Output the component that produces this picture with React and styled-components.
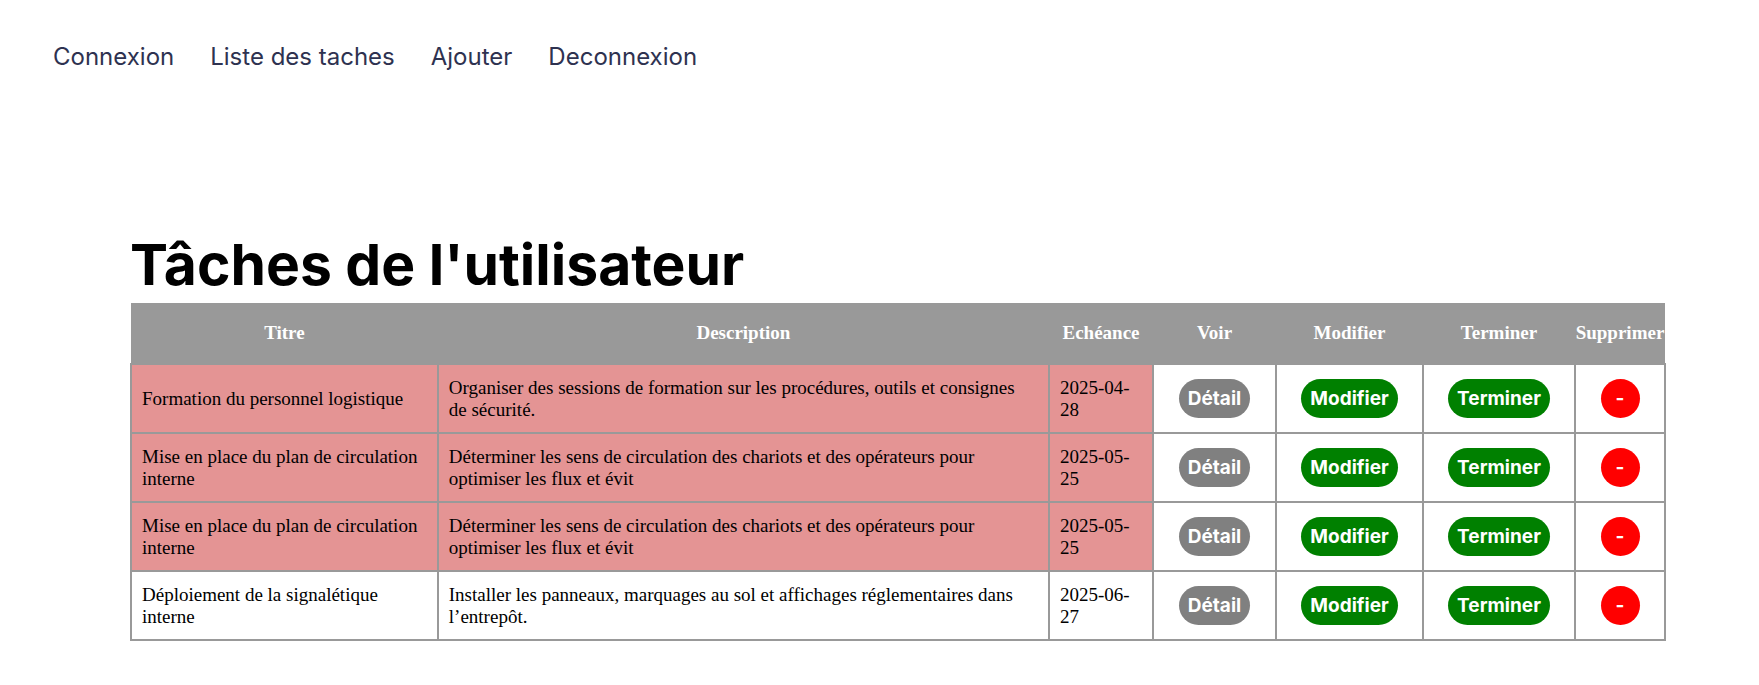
import React from "react";
import styled, { createGlobalStyle } from "styled-components";

const GlobalStyle = createGlobalStyle`
  *, *::before, *::after { box-sizing: border-box; }
  body { margin: 0; background: #fff; color: #000; font-family: Inter, sans-serif; }
`;

const Nav = styled.nav`
  display: flex;
  flex-wrap: wrap;
  gap: 36px;
  padding: 41px 53px;
`;

const NavLink = styled.a`
  color: #2e3250;
  font-size: 24px;
  line-height: 32px;
  font-weight: 400;
  text-decoration: none;
`;

const Main = styled.main`
  padding: 113px 93px 40px 130px;
`;

const Title = styled.h1`
  margin: 0;
  font-size: 57px;
  line-height: 76px;
  font-weight: 700;
`;

const Table = styled.table`
  width: 100%;
  table-layout: fixed;
  border-collapse: collapse;
  font-family: "Liberation Serif", serif;
  font-size: 19px;
  line-height: 22px;
`;

const Column = styled.col`
  width: ${(p) => p.$width};
`;

const HeadCell = styled.th`
  height: 61px;
  padding: 0;
  background: #999;
  color: #fff;
  font-weight: 700;
`;

const Cell = styled.td`
  height: 69px;
  padding: 0 12px 0 10px;
  border: 2px solid #999;
  background: ${(p) => (p.$late ? "#e49494" : "#fff")};
`;

const ActionCell = styled(Cell)`
  padding: 0;
  text-align: center;
`;

const ActionButton = styled.button`
  min-width: 39px;
  height: 39px;
  padding: 0 9px;
  border: 0;
  border-radius: 20px;
  background: ${(p) => p.$color};
  color: #fff;
  font-family: Inter, sans-serif;
  font-size: 19px;
  font-weight: 700;
  vertical-align: middle;
  cursor: pointer;
`;

const links = ["Connexion", "Liste des taches", "Ajouter", "Deconnexion"];

const columns = [
  { label: "Titre", width: "20%" },
  { label: "Description", width: "auto" },
  { label: "Echéance", width: "104px" },
  { label: "Voir", width: "123px" },
  { label: "Modifier", width: "147px" },
  { label: "Terminer", width: "152px" },
  { label: "Supprimer", width: "90px" },
];

const actions = [
  { label: "Détail", color: "gray" },
  { label: "Modifier", color: "green" },
  { label: "Terminer", color: "green" },
  { label: "-", name: "Supprimer", color: "red" },
];

const circulation = {
  title: "Mise en place du plan de circulation interne",
  description:
    "Déterminer les sens de circulation des chariots et des opérateurs pour optimiser les flux et évit",
  due: "2025-05-25",
  late: true,
};

const tasks = [
  {
    id: 1,
    title: "Formation du personnel logistique",
    description:
      "Organiser des sessions de formation sur les procédures, outils et consignes de sécurité.",
    due: "2025-04-28",
    late: true,
  },
  { id: 2, ...circulation },
  { id: 3, ...circulation },
  {
    id: 4,
    title: "Déploiement de la signalétique interne",
    description:
      "Installer les panneaux, marquages au sol et affichages réglementaires dans l’entrepôt.",
    due: "2025-06-27",
    late: false,
  },
];

function TaskRow({ task }) {
  return (
    <tr>
      <Cell $late={task.late}>{task.title}</Cell>
      <Cell $late={task.late}>{task.description}</Cell>
      <Cell $late={task.late}>{task.due}</Cell>
      {actions.map((a) => (
        <ActionCell key={a.label}>
          <ActionButton type="button" $color={a.color} aria-label={a.name}>
            {a.label}
          </ActionButton>
        </ActionCell>
      ))}
    </tr>
  );
}

export default function App() {
  return (
    <>
      <GlobalStyle />
      <Nav>
        {links.map((label) => (
          <NavLink key={label} href="#">{label}</NavLink>
        ))}
      </Nav>
      <Main>
        <Title>Tâches de l'utilisateur</Title>
        <Table>
          <colgroup>
            {columns.map((c) => (
              <Column key={c.label} $width={c.width} />
            ))}
          </colgroup>
          <thead>
            <tr>
              {columns.map((c) => (
                <HeadCell key={c.label} scope="col">{c.label}</HeadCell>
              ))}
            </tr>
          </thead>
          <tbody>
            {tasks.map((task) => (
              <TaskRow key={task.id} task={task} />
            ))}
          </tbody>
        </Table>
      </Main>
    </>
  );
}
